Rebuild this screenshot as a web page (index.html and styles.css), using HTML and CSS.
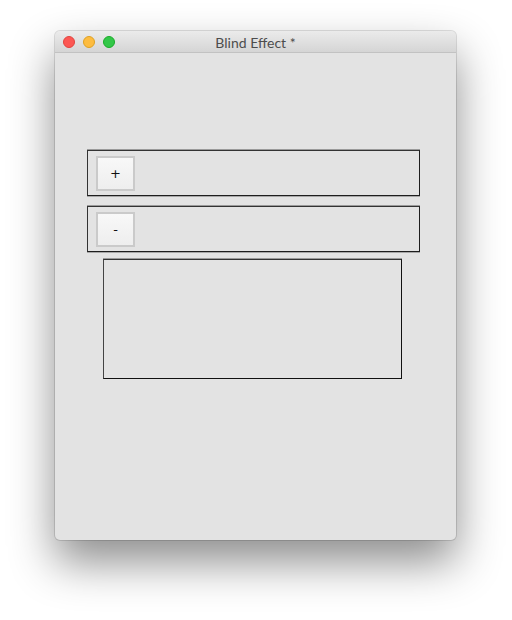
FILE: index.html
```html
<!DOCTYPE html>
<html>
<head>
<meta charset="utf-8">
<link rel="stylesheet" href="styles.css">
</head>
<body>
<div class="window">
  <div class="titlebar">
    <div class="lights">
      <span class="light red"></span>
      <span class="light yellow"></span>
      <span class="light green"></span>
    </div>
    <div class="title">Blind Effect *</div>
  </div>
  <div class="content">
    <div class="panel"><button class="btn">+</button></div>
    <div class="panel"><button class="btn">-</button></div>
    <div class="box"></div>
  </div>
</div>
</body>
</html>
```
FILE: styles.css
```css
html, body {
  margin: 0;
  padding: 0;
  background: #ffffff;
  width: 512px;
  height: 620px;
  overflow: hidden;
}
body {
  padding-top: 31px;
  padding-left: 55px;
  box-sizing: border-box;
  font-family: "Lato", "Liberation Sans", sans-serif;
}
.window {
  width: 401px;
  height: 509px;
  background: #e3e3e3;
  border-radius: 5px;
  box-shadow: 0 0 0 1px rgba(0,0,0,0.12), 0 22px 45px rgba(0,0,0,0.45);
  overflow: hidden;
  display: flex;
  flex-direction: column;
}
.titlebar {
  height: 22px;
  flex: none;
  background: linear-gradient(#ebebeb, #d5d5d5);
  border-bottom: 1px solid #c2c2c2;
  box-sizing: border-box;
  display: flex;
  align-items: center;
  position: relative;
}
.lights {
  display: flex;
  gap: 8px;
  padding-left: 8px;
}
.light {
  width: 12px;
  height: 12px;
  border-radius: 50%;
  box-sizing: border-box;
}
.red { background: #fc5753; border: 1px solid #e0443e; }
.yellow { background: #fdbc40; border: 1px solid #dea123; }
.green { background: #33c748; border: 1px solid #1aab29; }
.title {
  position: absolute;
  left: 0;
  right: 0;
  top: 1px;
  line-height: 22px;
  text-align: center;
  font-size: 14px;
  color: #4d4d4d;
  pointer-events: none;
}
.content {
  flex: 1;
  padding: 97px 0 0 32px;
  display: flex;
  flex-direction: column;
  align-items: flex-start;
}
.panel {
  width: 333px;
  height: 46px;
  box-sizing: border-box;
  border: 1px solid #1e1e1e;
  border-top-color: #333;
  border-left-color: #333;
  box-shadow: 0 -1px 0 #9a9a9a, 0 1px 0 #a8a8a8;
  padding: 5px 0 0 8px;
  margin-bottom: 10px;
}
.btn {
  width: 39px;
  height: 35px;
  box-sizing: border-box;
  border: 2px solid #cacaca;
  background: linear-gradient(#f8f8f8, #eeeeee);
  font-family: "DejaVu Sans", sans-serif;
  font-size: 13px;
  color: #111;
  padding: 0;
  margin: 0;
  display: flex;
  align-items: center;
  justify-content: center;
}
.box {
  margin-top: -3px;
  margin-left: 16px;
  width: 299px;
  height: 120px;
  box-sizing: border-box;
  border: 1px solid #111;
  border-top-color: #333;
  border-left-color: #444;
  box-shadow: 0 -1px 0 #9a9a9a;
}
```
